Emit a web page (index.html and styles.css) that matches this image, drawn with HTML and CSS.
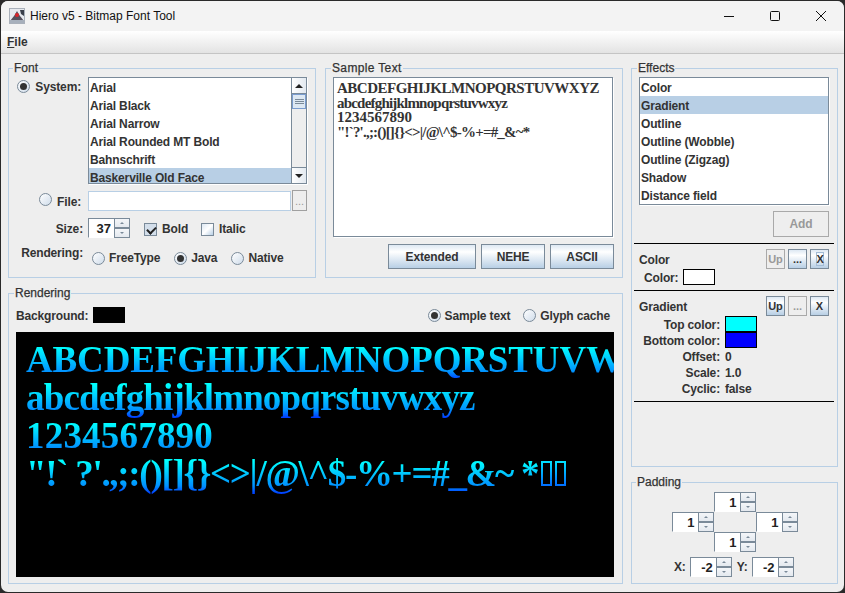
FILE: index.html
```html
<!DOCTYPE html>
<html lang="en">
<head>
    <meta charset="UTF-8">
    <title>Hiero v5 - Bitmap Font Tool</title>
    <link rel="stylesheet" href="styles.css">
</head>
<body>
<div class="window">
    <div class="titlebar">
        <svg class="app-icon" width="16" height="16" viewBox="0 0 16 16">
            <rect x="0.5" y="0.5" width="15" height="15" fill="#e6e9ee" stroke="#a9b0ba"/>
            <path d="M1 13 L5 8 L8 3 L11 8 L15 13 Z" fill="#55505c"/>
            <rect x="1" y="12" width="14" height="3" fill="#a7b0bc"/>
            <path d="M11 2 H15 V8 L12 6 Z" fill="#3a3f4a"/>
            <circle cx="8" cy="7" r="2" fill="#d8232a"/>
        </svg>
        <span class="title-text">Hiero v5 - Bitmap Font Tool</span>
        <div class="window-buttons">
            <svg width="12" height="12" viewBox="0 0 12 12"><path d="M1 6.5 H11" stroke="#111" fill="none"/></svg>
            <svg width="12" height="12" viewBox="0 0 12 12"><rect x="1.5" y="1.5" width="9" height="9" rx="1" stroke="#111" fill="none"/></svg>
            <svg width="12" height="12" viewBox="0 0 12 12"><path d="M1 1 L11 11 M11 1 L1 11" stroke="#111" fill="none"/></svg>
        </div>
    </div>
    <div class="menubar"><span class="menu-item"><u>F</u>ile</span></div>

    <div class="content">
        <div class="left-column">
            <div class="top-row">
                <fieldset class="panel font-panel">
                    <legend>Font</legend>
                    <div class="font-grid">
                        <div class="font-label choice-label"><span class="radio on"></span><b>System:</b></div>
                        <div class="list-box font-list">
                            <div class="rows">
                                <div class="row">Arial</div>
                                <div class="row">Arial Black</div>
                                <div class="row">Arial Narrow</div>
                                <div class="row">Arial Rounded MT Bold</div>
                                <div class="row">Bahnschrift</div>
                                <div class="row selected">Baskerville Old Face</div>
                            </div>
                            <div class="scrollbar">
                                <div class="scroll-btn"><span class="arrow-up"></span></div>
                                <div class="scroll-track"><div class="scroll-thumb"></div></div>
                                <div class="scroll-btn"><span class="arrow-down"></span></div>
                            </div>
                        </div>

                        <div class="font-label choice-label file-label"><span class="radio"></span><b>File:</b></div>
                        <div class="file-row">
                            <div class="file-input"></div>
                            <div class="dots-btn">...</div>
                        </div>

                        <div class="font-label size-label"><b>Size:</b></div>
                        <div class="size-row">
                            <div class="spinner"><div class="spin-value">37</div><div class="spin-arrows"><span></span><span></span></div></div>
                            <span class="check on"></span><b>Bold</b>
                            <span class="check"></span><b>Italic</b>
                        </div>

                        <div class="font-label render-label"><b>Rendering:</b></div>
                        <div class="render-row">
                            <span class="radio"></span><b>FreeType</b>
                            <span class="radio on"></span><b>Java</b>
                            <span class="radio"></span><b>Native</b>
                        </div>
                    </div>
                </fieldset>

                <fieldset class="panel sample-panel">
                    <legend>Sample Text</legend>
                    <div class="sample-box">
                        <div class="sample-upper">ABCDEFGHIJKLMNOPQRSTUVWXYZ</div>
                        <div class="sample-lower">abcdefghijklmnopqrstuvwxyz</div>
                        <div>1234567890</div>
                        <div class="sample-symbols">"!`?'.,;:()[]{}&lt;&gt;|/@\^$-%+=#_&amp;~*</div>
                    </div>
                    <div class="sample-buttons">
                        <div class="btn btn-extended">Extended</div>
                        <div class="btn btn-nehe">NEHE</div>
                        <div class="btn btn-ascii">ASCII</div>
                    </div>
                </fieldset>
            </div>

            <fieldset class="panel render-panel">
                <legend>Rendering</legend>
                <div class="render-head">
                    <b>Background:</b>
                    <span class="swatch bg-black"></span>
                    <div class="render-mode">
                        <span class="radio on"></span><b>Sample text</b>
                        <span class="radio"></span><b>Glyph cache</b>
                    </div>
                </div>
                <div class="canvas">
                    <div class="glyph-line line-upper">ABCDEFGHIJKLMNOPQRSTUVWXYZ</div>
                    <div class="glyph-line line-lower">abcdefghijklmnopqrstuvwxyz</div>
                    <div class="glyph-line line-digits">1234567890</div>
                    <div class="glyph-line line-symbols">"!` ?'.,;:()[]{}&lt;&gt;|/@\^$-%+=#_&amp;~ *<span class="missing"></span><span class="missing"></span></div>
                </div>
            </fieldset>
        </div>

        <div class="right-column">
            <fieldset class="panel effects-panel">
                <legend>Effects</legend>
                <div class="list-box effects-list">
                    <div class="rows">
                        <div class="row">Color</div>
                        <div class="row selected">Gradient</div>
                        <div class="row">Outline</div>
                        <div class="row">Outline (Wobble)</div>
                        <div class="row">Outline (Zigzag)</div>
                        <div class="row">Shadow</div>
                        <div class="row">Distance field</div>
                    </div>
                </div>
                <div class="add-row"><div class="btn disabled btn-add">Add</div></div>

                <div class="effect">
                    <div class="effect-head">
                        <b>Color</b>
                        <div class="small-btn disabled">Up</div>
                        <div class="small-btn">...</div>
                        <div class="small-btn focused"><span>X</span></div>
                    </div>
                    <div class="value-row color-value">
                        <b class="value-label">Color:</b><span class="swatch bg-white"></span>
                    </div>
                </div>

                <div class="effect">
                    <div class="effect-head">
                        <b>Gradient</b>
                        <div class="small-btn">Up</div>
                        <div class="small-btn disabled">...</div>
                        <div class="small-btn">X</div>
                    </div>
                    <div class="gradient-values">
                        <div class="value-row"><b class="value-label">Top color:</b><span class="swatch bg-cyan"></span></div>
                        <div class="value-row"><b class="value-label">Bottom color:</b><span class="swatch bg-blue"></span></div>
                        <div class="value-row text-row"><b class="value-label">Offset:</b><b>0</b></div>
                        <div class="value-row text-row"><b class="value-label">Scale:</b><b>1.0</b></div>
                        <div class="value-row text-row"><b class="value-label">Cyclic:</b><b>false</b></div>
                    </div>
                </div>
                <div class="effect-end"></div>
            </fieldset>

            <fieldset class="panel padding-panel">
                <legend>Padding</legend>
                <div class="padding-grid">
                    <div class="spinner pad-top"><div class="spin-value">1</div><div class="spin-arrows"><span></span><span></span></div></div>
                    <div class="spinner pad-left"><div class="spin-value">1</div><div class="spin-arrows"><span></span><span></span></div></div>
                    <div class="spinner pad-right"><div class="spin-value">1</div><div class="spin-arrows"><span></span><span></span></div></div>
                    <div class="spinner pad-bottom"><div class="spin-value">1</div><div class="spin-arrows"><span></span><span></span></div></div>
                </div>
                <div class="offset-row">
                    <b>X:</b>
                    <div class="spinner"><div class="spin-value">-2</div><div class="spin-arrows"><span></span><span></span></div></div>
                    <b>Y:</b>
                    <div class="spinner"><div class="spin-value">-2</div><div class="spin-arrows"><span></span><span></span></div></div>
                </div>
            </fieldset>
        </div>
    </div>
</div>
</body>
</html>
```
FILE: styles.css
```css
* {
    box-sizing: border-box;
}
html, body {
    margin: 0;
    height: 100%;
    background: #2a2a2a;
    overflow: hidden;
}
body {
    font-family: "Liberation Sans", Arial, sans-serif;
    font-size: 12px;
    color: #333;
}
b, .row, .btn {
    font-weight: bold;
    font-size: 12px;
    letter-spacing: -0.15px;
}
.window {
    width: 843px;
    height: 591px;
    margin: 1px;
    background: #eeeeee;
    border-radius: 7px;
    overflow: hidden;
    display: flex;
    flex-direction: column;
}

/* title bar */
.titlebar {
    height: 30px;
    flex: none;
    background: #f3f3f3;
    display: flex;
    align-items: center;
    padding-left: 8px;
    font-size: 12px;
    color: #111;
}
.app-icon {
    margin-right: 5px;
}
.window-buttons {
    margin-left: auto;
    display: flex;
    gap: 34px;
    padding-right: 17px;
}
.menubar {
    height: 23px;
    flex: none;
    background: linear-gradient(#ffffff, #e3e3e3);
    border-bottom: 1px solid #c4c4c4;
    padding: 4px 6px 0;
    font-weight: bold;
    color: #333;
}

/* main layout */
.content {
    flex: 1;
    display: flex;
    gap: 8px;
    padding: 7px 0 8px 7px;
}
.left-column {
    width: 615px;
    display: flex;
    flex-direction: column;
    gap: 8px;
}
.top-row {
    display: flex;
    gap: 9px;
    height: 217px;
    flex: none;
}
.right-column {
    width: 207px;
    display: flex;
    flex-direction: column;
    gap: 8px;
}
.panel {
    margin: 0;
    padding: 0;
    min-width: 0;
    border: 1px solid #b8cfe5;
    position: relative;
}
.panel legend {
    margin-left: 5px;
    padding: 0 1px 0 1px;
    font-size: 12px;
    line-height: 14px;
    color: #333;
    font-weight: normal;
    -webkit-text-stroke: 0.25px #333;
}
.font-panel legend {
    margin-left: 4px;
}
.sample-panel legend {
    letter-spacing: 0.35px;
}

/* widgets */
.radio {
    display: inline-block;
    width: 13px;
    height: 13px;
    border-radius: 50%;
    border: 1px solid #7a8a99;
    background: linear-gradient(135deg, #ffffff, #cfdcea);
    flex: none;
    position: relative;
}
.radio.on::after {
    content: "";
    position: absolute;
    left: 2px;
    top: 2px;
    width: 7px;
    height: 7px;
    border-radius: 50%;
    background: #333;
}
.check {
    display: inline-block;
    width: 13px;
    height: 13px;
    border: 1px solid #7a8a99;
    background: linear-gradient(135deg, #dde8f3, #ffffff 50%, #b8cfe5);
    flex: none;
    position: relative;
}
.check.on {
    background: #d3deea;
}
.check.on::after {
    content: "";
    position: absolute;
    left: 2px;
    top: 1px;
    width: 7px;
    height: 4px;
    border-left: 2px solid #222;
    border-bottom: 2px solid #222;
    transform: rotate(-45deg) translate(-1px, 1px);
}
.list-box {
    border: 1px solid #7a8a99;
    background: #fff;
    display: flex;
    overflow: hidden;
    box-shadow: 1px 1px 0 #fff;
}
.rows {
    flex: 1;
    min-width: 0;
}
.row {
    height: 18px;
    line-height: 20px;
    padding-left: 1px;
    white-space: nowrap;
}
.row.selected {
    background: #b8cfe5;
}
.scrollbar {
    width: 15px;
    flex: none;
    display: flex;
    flex-direction: column;
    background: #eeeeee;
    border-left: 1px solid #7a8a99;
}
.scroll-btn {
    height: 16px;
    flex: none;
    background: linear-gradient(90deg, #ffffff, #e3e9f0);
    display: flex;
    align-items: center;
    justify-content: center;
    border-bottom: 1px solid #7a8a99;
}
.scroll-btn:last-child {
    border-bottom: none;
    border-top: 1px solid #7a8a99;
}
.arrow-up, .arrow-down {
    width: 0;
    height: 0;
    border-left: 4px solid transparent;
    border-right: 4px solid transparent;
}
.arrow-up {
    border-bottom: 4px solid #222;
}
.arrow-down {
    border-top: 4px solid #222;
}
.scroll-track {
    flex: 1;
}
.scroll-thumb {
    height: 15px;
    border: 1px solid #7a9ccf;
    background:
        linear-gradient(#7a8a99, #7a8a99) center 4px / 9px 1px no-repeat,
        linear-gradient(#7a8a99, #7a8a99) center 6px / 9px 1px no-repeat,
        linear-gradient(#7a8a99, #7a8a99) center 8px / 9px 1px no-repeat,
        #dde8f3;
}
.btn {
    height: 26px;
    line-height: 25px;
    text-align: center;
    border: 1px solid #7a8a99;
    background: linear-gradient(#dde8f3, #ffffff 30%, #b8cfe5);
}
.btn.disabled, .small-btn.disabled {
    border-color: #a9a9a9;
    background: #eeeeee;
    color: #999;
}
.spinner {
    width: 42px;
    height: 20px;
    display: flex;
    border: 1px solid #7a8a99;
    border-right: none;
    border-bottom-color: #fff;
    background: #fff;
}
.spin-value {
    width: 25px;
    line-height: 19px;
    text-align: right;
    padding-right: 3px;
    font-size: 13px;
    font-weight: bold;
    color: #222;
}
.spin-arrows {
    flex: 1;
    display: flex;
    flex-direction: column;
    margin-top: -1px;
    margin-bottom: -1px;
}
.spin-arrows span {
    flex: 1;
    display: flex;
    align-items: center;
    justify-content: center;
    border: 1px solid #7a8a99;
    background: linear-gradient(#f4f6f9, #e4e9ef);
}
.spin-arrows span::after {
    content: "";
    border-left: 2px solid transparent;
    border-right: 2px solid transparent;
    border-bottom: 2px solid #7a8a99;
}
.spin-arrows span + span::after {
    border-bottom: none;
    border-top: 2px solid #7a8a99;
}
.swatch {
    display: inline-block;
    width: 32px;
    height: 16px;
    border: 1px solid #000;
    flex: none;
}
.bg-black { background: #000; }
.bg-white { background: #fff; }
.bg-cyan { background: #00ffff; }
.bg-blue { background: #0000ff; }

/* font panel */
.font-panel {
    width: 308px;
}
.font-grid {
    display: grid;
    grid-template-columns: 74px 219px;
    column-gap: 5px;
    align-content: start;
    padding-top: 2px;
}
.font-label {
    display: flex;
    justify-content: flex-end;
    align-items: flex-start;
    gap: 5px;
    line-height: 21px;
}
.choice-label {
    padding-right: 2px;
}
.font-label .radio {
    margin-top: 3px;
}
.font-list {
    height: 107px;
}
.font-list .rows {
    overflow: hidden;
}
.font-list .row.selected {
    height: 16px;
}
.file-label {
    margin: 8px 0 -2px;
}
.file-label .radio {
    margin-top: 1px;
}
.file-row {
    display: flex;
    margin-top: 6px;
    height: 21px;
}
.file-input {
    flex: 1;
    height: 20px;
    margin-top: 1px;
    background: #fff;
    border: 1px solid #b8cfe5;
}
.dots-btn {
    width: 15px;
    margin-left: 1px;
    border: 1px solid #a0a0a0;
    color: #999;
    text-align: center;
    line-height: 20px;
    font-size: 11px;
}
.size-label {
    margin: 8px 0 -2px;
}
.size-row {
    display: flex;
    align-items: center;
    margin-top: 7px;
    height: 20px;
}
.size-row .check {
    margin: 2px 5px 0 14px;
}
.size-row b {
    margin-top: 2px;
}
.size-row b + .check {
    margin-left: 13px;
}
.render-label {
    margin-top: 5px;
}
.render-row {
    display: flex;
    align-items: center;
    gap: 4px;
    margin-top: 11px;
    margin-left: 4px;
    height: 18px;
}
.render-row b {
    margin-right: 10px;
}

/* sample panel */
.sample-panel {
    width: 298px;
    display: flex;
    flex-direction: column;
}
.sample-box {
    margin: 2px 0 0 7px;
    width: 280px;
    height: 160px;
    background: #fff;
    border: 1px solid #7a8a99;
    padding: 3px 3px;
    font-family: "Liberation Serif", serif;
    font-size: 15px;
    line-height: 14.6px;
    font-weight: bold;
    color: #333;
    white-space: nowrap;
    overflow: hidden;
    box-shadow: 1px 1px 0 #fff;
}
.sample-upper {
    letter-spacing: -0.5px;
}
.sample-lower {
    letter-spacing: -0.8px;
}
.sample-symbols {
    letter-spacing: -0.8px;
}
.sample-buttons {
    display: flex;
    justify-content: flex-end;
    margin: 7px 8px 0 0;
    gap: 5px;
}
.sample-buttons .btn {
    height: 25px;
}
.btn-extended { width: 88px; }
.btn-nehe { width: 64px; }
.btn-ascii { width: 64px; }

/* rendering panel */
.render-panel {
    flex: 1;
}
.render-head {
    display: flex;
    align-items: center;
    height: 18px;
    padding: 0 12px 0 7px;
    gap: 5px;
    margin-top: 6px;
}
.render-head b, .effect-head b, .value-row b {
    padding-top: 2px;
}
.render-mode {
    margin-left: auto;
    display: flex;
    align-items: center;
    gap: 4px;
}
.render-mode b + .radio {
    margin-left: 9px;
}
.canvas {
    margin: 8px 0 0 7px;
    width: 598px;
    height: 245px;
    background: #000;
    overflow: hidden;
    padding: 9px 0 0 10px;
    font-family: "Liberation Serif", serif;
    font-weight: bold;
    font-size: 37px;
    white-space: nowrap;
}
.glyph-line {
    height: 44px;
    line-height: 38px;
    margin-bottom: -6px;
    width: max-content;
    background: linear-gradient(#00ffff 6px, #0090ff 31px, #0000ff 44px);
    -webkit-background-clip: text;
    background-clip: text;
    color: transparent;
}
.line-upper {
    letter-spacing: -0.15px;
}
.line-lower {
    letter-spacing: -0.85px;
}
.line-digits {
    letter-spacing: 0.2px;
}
.line-symbols {
    letter-spacing: -1.3px;
}
.missing {
    display: inline-block;
    width: 11px;
    height: 25px;
    margin-left: 3px;
    border: 2px solid #00a0ff;
    border-image: linear-gradient(#00e0ff, #0070ff) 1;
    vertical-align: 0;
}

/* effects panel */
.effects-panel {
    flex: 1;
    padding: 0 3px 0 2px;
}
.effects-panel legend {
    margin-left: 3px;
}
.effects-list {
    margin: 2px 5px 0 5px;
    height: 128px;
}
.add-row {
    display: flex;
    justify-content: flex-end;
    margin: 6px 5px 0 0;
}
.btn-add {
    width: 56px;
}
.effect {
    border-top: 1px solid #000;
    margin-top: 6px;
    padding: 5px 5px 0 5px;
}
.effect + .effect {
    margin-top: 5px;
}
.effect-head {
    display: flex;
    align-items: center;
    gap: 3px;
    height: 20px;
}
.effect-head b {
    margin-right: auto;
}
.small-btn {
    width: 19px;
    height: 20px;
    line-height: 18px;
    text-align: center;
    font-size: 11px;
    font-weight: bold;
    border: 1px solid #7a8a99;
    background: linear-gradient(#dde8f3, #ffffff 30%, #b8cfe5);
}
.small-btn.focused span {
    display: inline-block;
    width: 8px;
    height: 14px;
    line-height: 12px;
    border: 1px solid #a3bcd6;
}
.value-row {
    display: flex;
    align-items: center;
    gap: 5px;
}
.color-value {
    padding-left: 5px;
}
.gradient-values .value-label {
    width: 81px;
    text-align: right;
}
.text-row {
    height: 16px;
}
.effect-end {
    border-top: 1px solid #000;
    margin-top: 5px;
}

/* padding panel */
.padding-panel {
    height: 109px;
    flex: none;
}
.padding-panel legend {
    margin-left: 4px;
}
.padding-grid {
    display: grid;
    grid-template-columns: repeat(3, 42px);
    grid-template-rows: repeat(3, 20px);
    justify-content: center;
    margin-top: 3px;
}
.pad-top { grid-column: 2; grid-row: 1; }
.pad-left { grid-column: 1; grid-row: 2; }
.pad-right { grid-column: 3; grid-row: 2; }
.pad-bottom { grid-column: 2; grid-row: 3; }
.offset-row {
    display: flex;
    align-items: center;
    margin: 5px 0 0 42px;
    gap: 4px;
}
.offset-row .spinner + b {
    margin-left: 1px;
}
```
